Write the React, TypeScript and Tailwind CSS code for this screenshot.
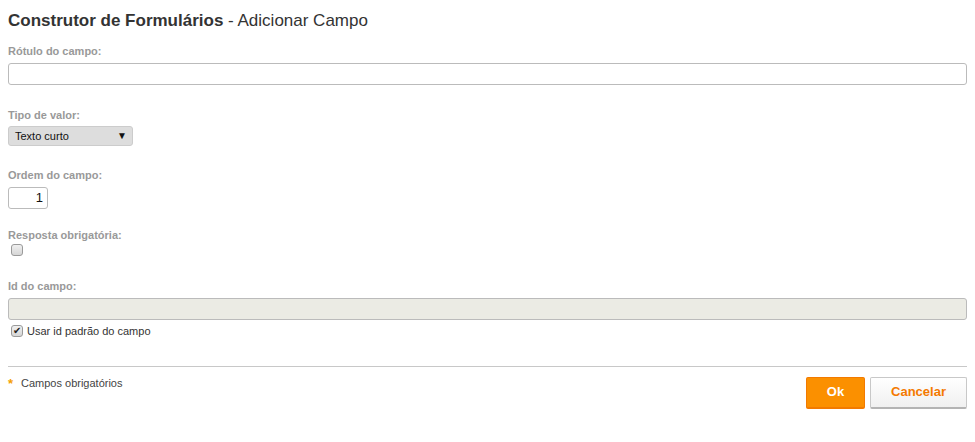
import React from 'react';

function Label({ children, className = '' }: { children: React.ReactNode; className?: string }) {
  return (
    <div className={`text-[11px] leading-[13px] font-bold text-[#999] ${className}`}>{children}</div>
  );
}

function CheckBox({ checked = false }: { checked?: boolean }) {
  return (
    <div className="w-3 h-3 rounded-[3px] border border-[#9a9a9a] bg-gradient-to-b from-[#f0f0f0] to-[#d6d6d6] flex items-center justify-center text-[10px] leading-none text-[#222]">
      {checked && '✔'}
    </div>
  );
}

export default function App() {
  return (
    <div className="px-2 pt-[11px] font-['Liberation_Sans',Arial,sans-serif] text-[#333] bg-white min-h-screen">
      <h1 className="text-[17px] leading-[20px] text-[#333]">
        <span className="font-bold">Construtor de Formulários</span> - Adicionar Campo
      </h1>

      {/* Rótulo */}
      <Label className="mt-[14px]">Rótulo do campo:</Label>
      <div className="mt-[5px] h-[22px] w-full rounded-[3px] border border-[#bbb] bg-white" />

      {/* Tipo */}
      <Label className="mt-[24px]">Tipo de valor:</Label>
      <div className="mt-[4px] h-[20px] w-[125px] rounded-[3px] border border-[#ccc] bg-[#dddddd] flex items-center justify-between pl-[6px] pr-[5px] text-[11px] text-[#111]">
        <span>Texto curto</span>
        <span className="text-[10px] leading-none">▼</span>
      </div>

      {/* Ordem */}
      <Label className="mt-[23px]">Ordem do campo:</Label>
      <div className="mt-[5px] h-[22px] w-[40px] rounded-[3px] border border-[#bbb] bg-white flex items-center justify-end pr-[4px] text-[13px] text-[#111]">
        1
      </div>

      {/* Obrigatória */}
      <Label className="mt-[20px]">Resposta obrigatória:</Label>
      <div className="mt-[2px] ml-[3px]">
        <CheckBox />
      </div>

      {/* Id */}
      <Label className="mt-[24px]">Id do campo:</Label>
      <div className="mt-[5px] h-[22px] w-full rounded-[3px] border border-[#bbb] bg-[#ebebe4]" />
      <div className="mt-[3px] ml-[3px] flex items-center gap-[4px] text-[11px] text-[#333]">
        <CheckBox checked />
        <span>Usar id padrão do campo</span>
      </div>

      <hr className="mt-[26px] border-t border-[#c8c8c8]" />

      <div className="mt-[10px] flex items-start justify-between">
        <div className="flex items-start text-[11px] leading-[13px] text-[#444]">
          <span className="text-[#f5a000] text-[13px] font-bold leading-[13px] w-[13px]">*</span>
          <span>Campos obrigatórios</span>
        </div>
        <div className="flex gap-[5px]">
          <button className="h-[32px] w-[59px] rounded-[2px] border border-[#f27a00] border-b-2 bg-[#fb9000] text-white text-[13px] font-bold">
            Ok
          </button>
          <button className="h-[32px] w-[97px] rounded-[2px] border border-[#c8c8c8] border-b-2 border-b-[#b4b4b4] bg-gradient-to-b from-white to-[#f0f0f0] text-[#f47a00] text-[13px] font-bold">
            Cancelar
          </button>
        </div>
      </div>
    </div>
  );
}
